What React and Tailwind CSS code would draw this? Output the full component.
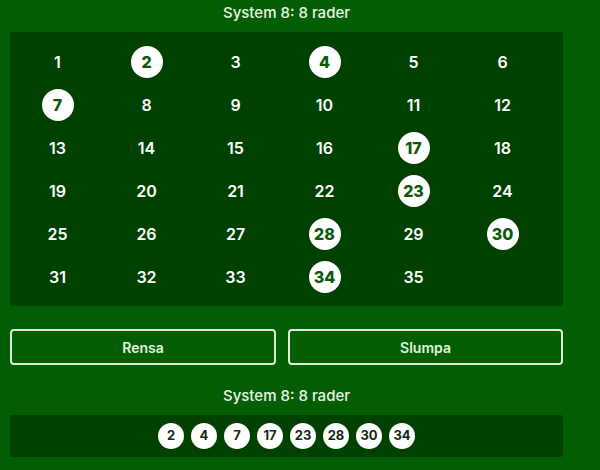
const NUMBERS = Array.from({ length: 35 }, (_, i) => i + 1)
const SELECTED = [2, 4, 7, 17, 23, 28, 30, 34]

function Cell({ n }) {
  const on = SELECTED.includes(n)
  return (
    <div className="flex h-[43px] w-[89px] items-center justify-center">
      {on ? (
        <span className="flex h-8 w-8 items-center justify-center rounded-full bg-white text-[16px] font-extrabold text-[#0a5a0a]">
          {n}
        </span>
      ) : (
        <span className="text-[16px] font-semibold text-white">{n}</span>
      )}
    </div>
  )
}

export default function App() {
  return (
    <div
      className="h-[470px] w-[600px] bg-[#035e03] pl-[10px] pr-[37px]"
      style={{ fontFamily: 'Inter, "Noto Sans", sans-serif' }}
    >
      <div className="pt-[3px] text-center text-[15px] font-medium leading-[20px] text-[#eaf6e6]">
        System 8: 8 rader
      </div>

      <div className="mt-[9px] rounded-[3px] bg-[#004100] py-2 pl-[3px]">
        <div className="grid grid-cols-[repeat(6,89px)]">
          {NUMBERS.map((n) => (
            <Cell key={n} n={n} />
          ))}
        </div>
      </div>

      <div className="mt-[23px] flex gap-3">
        <button className="h-9 w-[266px] rounded-[4px] border-2 border-[#dcefd6] text-[14px] font-semibold text-[#e4f4df]">
          Rensa
        </button>
        <button className="h-9 flex-1 rounded-[4px] border-2 border-[#dcefd6] text-[14px] font-semibold text-[#e4f4df]">
          Slumpa
        </button>
      </div>

      <div className="mt-[21px] text-center text-[15px] font-medium leading-[20px] text-[#eaf6e6]">
        System 8: 8 rader
      </div>

      <div className="mt-[9px] flex h-[42px] items-center justify-center gap-[7px] rounded-[3px] bg-[#004100]">
        {SELECTED.map((n) => (
          <span
            key={n}
            className="flex h-[26px] w-[26px] items-center justify-center rounded-full bg-white text-[13px] font-bold text-[#142814]"
          >
            {n}
          </span>
        ))}
      </div>
    </div>
  )
}
